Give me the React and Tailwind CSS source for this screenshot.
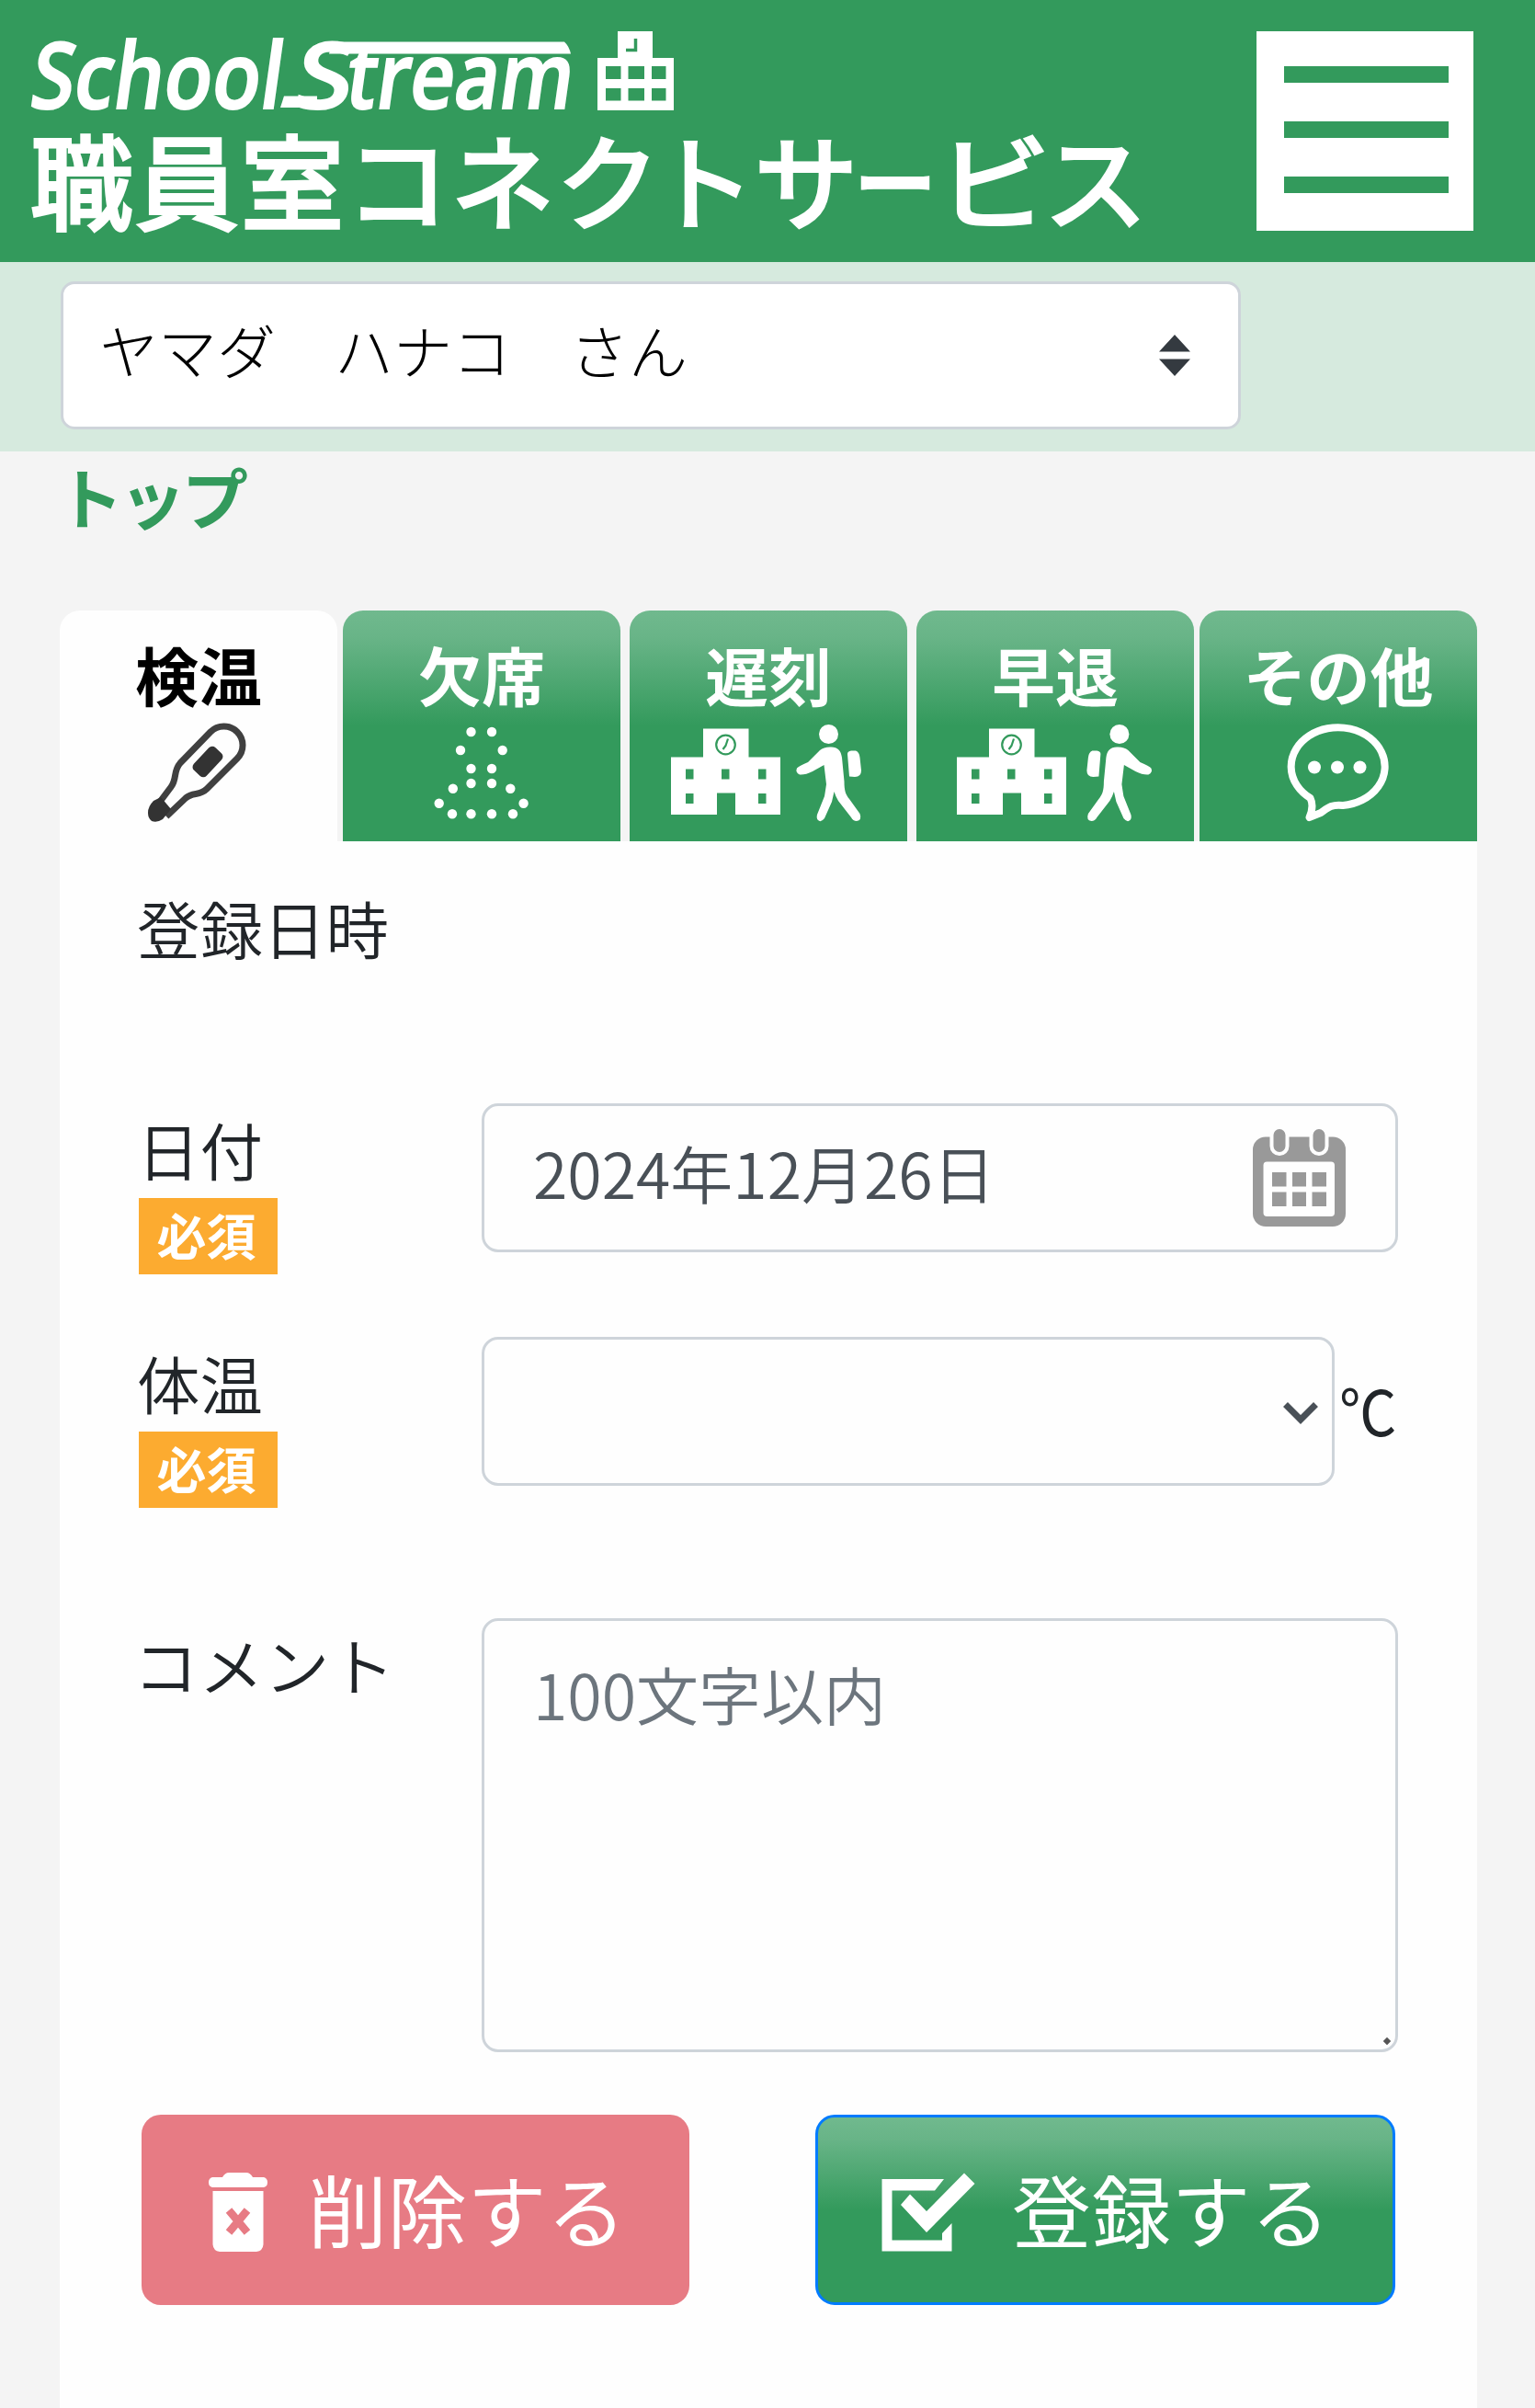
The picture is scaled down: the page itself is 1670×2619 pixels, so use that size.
import React from "react";

function SchoolMark() {
  return (
    <svg className="ml-[26px] h-[86px] w-[83px]" viewBox="650 34 83 86" fill="#fff">
      <path
        fillRule="evenodd"
        d="M650 63H672V34H710V63H733V120H650ZM659 72V86H675.5V72ZM683.5 72V86H701V72ZM709 72V86H724.5V72ZM659 96V109.5H675.5V96ZM683.5 96V109.5H701V96ZM709 96V109.5H724.5V96Z"
      />
      <path d="M691.5 42V54.5H681" fill="none" stroke="#339a5c" strokeWidth="3.5" />
    </svg>
  );
}

function Header() {
  return (
    <header className="flex h-[285px] items-start justify-between bg-[#339a5c] pl-[34px] pr-[67px] pt-[34px]">
      <div className="text-white">
        <div className="flex h-[86px] items-start">
          <div className="relative h-[86px] w-[590px]">
            <div className="-ml-[4px] flex h-[86px] origin-bottom-left -skew-x-[8deg] whitespace-nowrap font-['Open_Sans',sans-serif] text-[100px] font-semibold leading-[90px] [-webkit-text-stroke:2px_#fff]">
              <span className="block w-[288px]">
                <span className="inline-block origin-left scale-x-[0.86]">School</span>
              </span>
              <span className="block w-[64px]">
                <span className="inline-block origin-left scale-x-[1.12]">S</span>
              </span>
              <span className="inline-block origin-left scale-x-[0.84]">tream</span>
            </div>
            <svg className="absolute left-0 top-0 h-[86px] w-[590px]" viewBox="34 34 590 86" fill="#fff">
              <path d="M362 45.500H614Q619 50 621 58.500H358Z" />
              <path d="M309 104.500H345V117H305Z" />
            </svg>
          </div>
          <SchoolMark />
        </div>
        <div className="-ml-px mt-[16px] flex h-[115px] whitespace-nowrap text-[112px] leading-[114px] [-webkit-text-stroke:4px_#fff]">
          <span className="block w-[676px] tracking-[2.5px]">職員室コネク</span>
          <span className="block w-[112px]">ト</span>
          <span className="block w-[97px]">サ</span>
          <span className="block w-[107px]">
            <span className="inline-block scale-x-[0.8]">ー</span>
          </span>
          <span className="block w-[111px]">
            <span className="inline-block scale-x-110">ビ</span>
          </span>
          <span className="block">ス</span>
        </div>
      </div>
      <button className="flex h-[217px] w-[236px] flex-col justify-between bg-white pb-[41px] pl-[30px] pr-[27px] pt-[38px]">
        <span className="block h-[18px] w-full bg-[#339a5c]" />
        <span className="block h-[18px] w-full bg-[#339a5c]" />
        <span className="block h-[18px] w-full bg-[#339a5c]" />
      </button>
    </header>
  );
}

function PersonBar() {
  return (
    <div className="h-[206px] bg-[#d6eade] pl-[66px] pt-[21px]">
      <div className="flex h-[161px] w-[1284px] items-center justify-between rounded-[15px] border-[3px] border-[#ced4da] bg-white pl-[39px] pr-[52px]">
        <span className="relative -top-[8px] whitespace-nowrap text-[64px] font-light leading-[80px] text-black">
          ヤマダ　ハナコ　さん
        </span>
        <svg className="h-[45px] w-[34px]" viewBox="0 0 34 45" fill="#343a40">
          <path d="M17 0L34 18.500H0ZM0 26.500H34L17 45Z" />
        </svg>
      </div>
    </div>
  );
}

function Thermometer() {
  return (
    <svg className="h-[110px] w-[260px]" viewBox="86 786 260 110">
      <path
        d="M171 876L186 856C193 847 188 839 196 830L229 796A20 20 0 0 1 258 825L225 858C217 866 210 861 202 868L181 888"
        fill="none"
        stroke="#404040"
        strokeWidth="7"
      />
      <path d="M161 884Q161 877 167 871L175 867L186 880L177 891Q171 895 165 893Q161 890 161 884Z" fill="#333" />
      <rect x="209" y="819" width="34" height="19" rx="5" fill="#333" transform="rotate(-47 226 828.5)" />
    </svg>
  );
}

const dots = [
  [512.5, 796], [535, 796], [501, 816], [546.7, 816], [512.5, 836], [535, 836],
  [512.5, 852], [535, 852], [492.8, 857.7], [555.3, 857.7], [477.7, 873.7],
  [569.6, 873.7], [492, 885.3], [512.5, 885.3], [535, 885.3], [558, 885.3],
];

function DottedPerson() {
  return (
    <svg className="h-[110px] w-[260px]" viewBox="394 786 260 110" fill="#fff">
      {dots.map(([x, y]) => (
        <circle key={x + "-" + y} cx={x} cy={y} r="5.200" />
      ))}
    </svg>
  );
}

function SchoolBuilding() {
  return (
    <g>
      <path d="M730 823.500H765V792.500H814.500V823.500H849V886H800V862.500H780V886H730Z" />
      <g fill="#339a5c">
        <rect x="746" y="836.500" width="8.500" height="11" />
        <rect x="785" y="836.500" width="8.500" height="11" />
        <rect x="825" y="836.500" width="8.500" height="11" />
        <rect x="746" y="863" width="8.500" height="11" />
        <rect x="825" y="863" width="8.500" height="11" />
      </g>
      <circle cx="789.500" cy="810" r="10.300" fill="none" stroke="#339a5c" strokeWidth="2.200" />
      <path d="M792 803.500L789.500 811L786.500 815" fill="none" stroke="#339a5c" strokeWidth="2.200" />
    </g>
  );
}

function Walker() {
  return (
    <g>
      <ellipse cx="901.500" cy="798.500" rx="10.500" ry="10.500" />
      <path d="M903 812.500C911 812 915 816 916 824L918.500 850C918.500 860 920 864 924 869L935.500 885Q938 892 932 893Q928 893 926 889L912 871Q909 866 907.500 861L905 872L897 890Q893 895 890 892Q888 890 889 886L897 866Q898 860 899 853L896.500 832L884 839Q876 843 870 842.500Q865 840 867 835.500Q869 833 879 829L892 816Q896 812.500 903 812.500Z" />
      <path d="M926 816.500H931Q935 818 935.500 824L937 838Q937 845 930 845L924 844.500L922 820Q922 817 926 816.500Z" />
    </g>
  );
}

function ArriveIcon() {
  return (
    <svg className="h-[110px] w-[302px]" viewBox="685 786 302 110" fill="#fff">
      <SchoolBuilding />
      <Walker />
    </svg>
  );
}

function LeaveIcon() {
  return (
    <svg className="h-[110px] w-[302px]" viewBox="997 786 302 110" fill="#fff">
      <g transform="translate(311 0)">
        <SchoolBuilding />
      </g>
      <g transform="translate(2119.400 0) scale(-1 1)">
        <Walker />
      </g>
    </svg>
  );
}

function BubbleIcon() {
  return (
    <svg className="h-[110px] w-[302px]" viewBox="1305 786 302 110">
      <path
        d="M1424.500 889C1428 881 1429 875 1425.500 868A51 42.500 0 1 1 1461 876C1448 874.500 1444 879 1437 884Z"
        fill="none"
        stroke="#fff"
        strokeWidth="8"
        strokeLinejoin="round"
      />
      <circle cx="1430" cy="834.500" r="7" fill="#fff" />
      <circle cx="1455" cy="834.500" r="7" fill="#fff" />
      <circle cx="1479.500" cy="834.500" r="7" fill="#fff" />
    </svg>
  );
}

function Tab({ label, active, className, children }) {
  return (
    <div
      className={
        "flex h-[251px] w-[302px] shrink-0 flex-col items-center rounded-t-[22px] " +
        (active
          ? "bg-[#fefefe] text-black "
          : "bg-[linear-gradient(180deg,#70b98e_0%,#68b487_12%,#339a5c_50%)] text-white ") +
        className
      }
    >
      <span className="mt-[34px] h-[76px] whitespace-nowrap text-[69px] font-bold leading-[71px]">{label}</span>
      <div className="mt-[12px]">{children}</div>
    </div>
  );
}

function Tabs() {
  return (
    <div className="flex pl-[65px]">
      <Tab label="検温" active className="">
        <Thermometer />
      </Tab>
      <Tab label="欠席" className="ml-[6px]">
        <DottedPerson />
      </Tab>
      <Tab label="遅刻" className="ml-[10px]">
        <ArriveIcon />
      </Tab>
      <Tab label="早退" className="ml-[10px]">
        <LeaveIcon />
      </Tab>
      <Tab label="その他" className="ml-[6px]">
        <BubbleIcon />
      </Tab>
    </div>
  );
}

function Label({ text, required }) {
  return (
    <div className="flex w-[374px] shrink-0 flex-col items-start">
      <span className="-ml-px h-[92px] whitespace-nowrap text-[68.5px] font-[350] leading-[94px]">{text}</span>
      {required && (
        <span className="ml-px mt-[8px] flex h-[83px] w-[151px] items-center justify-center bg-[#fcab30] text-[54px] font-bold leading-[76px] text-white">
          <span className="relative -left-[2px] -top-[2px]">必須</span>
        </span>
      )}
    </div>
  );
}

function CalendarIcon() {
  return (
    <svg className="h-[108px] w-[102px]" viewBox="1363 1227 102 108">
      <rect x="1363" y="1236.500" width="101" height="97.500" rx="14" fill="#999" />
      <rect x="1374.500" y="1263.500" width="77.500" height="59.500" rx="4" fill="#fefefe" />
      <g fill="#999" stroke="#fefefe" strokeWidth="4">
        <rect x="1383.500" y="1226" width="17" height="29" rx="8.500" />
        <rect x="1426.500" y="1226" width="17" height="29" rx="8.500" />
      </g>
      <path
        fill="#999"
        d="M1384 1275h15.500v15.500h-15.500zM1406 1275h15v15.500h-15zM1427.500 1275h15.500v15.500h-15.500zM1384 1296.500h15.500v15.500h-15.500zM1406 1296.500h15v15.500h-15zM1427.500 1296.500h15.500v15.500h-15.500z"
      />
    </svg>
  );
}

function TrashIcon() {
  return (
    <svg className="mt-[5px] h-[86px] w-[64px]" viewBox="227 2363 64 86" fill="#fff">
      <path d="M231 2368H242Q245 2363 249 2363H268Q272 2363 275 2368H287Q291 2369 291 2373.500T287 2379H231Q227 2378 227 2373.500T231 2368Z" />
      <path d="M231.500 2383H286.500V2441Q286 2448 279 2449H239Q232 2448 231.500 2441Z" />
      <path d="M249 2404L269 2428M269 2404L249 2428" stroke="#e77b84" strokeWidth="8.500" />
    </svg>
  );
}

function CheckIcon() {
  return (
    <svg className="mt-[5px] h-[86px] w-[102px]" viewBox="959 2363 102 86" fill="#fff">
      <path d="M959.500 2370H1027L1017 2382.500H970.500V2436.500H1025V2429L1035.500 2418V2448.500H959.500Z" />
      <path d="M990 2386.500L980 2398L1008 2428L1060.500 2375L1049 2363.500L1008 2405Z" />
    </svg>
  );
}

function Form() {
  return (
    <main className="ml-[65px] h-[1704px] w-[1542px] bg-[#fefefe] pl-[85px] pr-[86px] pt-[47px] text-[#212529]">
      <Label text="登録日時" />
      <div className="mt-[146px] flex h-[254px]">
        <div className="pt-[3px]">
          <Label text="日付" required />
        </div>
        <div className="flex h-[162px] w-[997px] items-center justify-between rounded-[18px] border-[3.5px] border-[#ced4da] pl-[53px] pr-[53px] text-[#495057]">
          <span className="relative -top-[6px] whitespace-nowrap text-[68px] font-[350] leading-[90px]">
            2024年12月26日
          </span>
          <CalendarIcon />
        </div>
      </div>
      <div className="flex h-[306px]">
        <div className="pt-[3px]">
          <Label text="体温" required />
        </div>
        <div className="flex h-[162px] w-[928px] shrink-0 items-center justify-end rounded-[18px] border-[3.5px] border-[#ced4da] pr-[15px]">
          <svg className="mt-[3px] h-[24px] w-[38px]" viewBox="0 0 38 24" fill="none" stroke="#495057" strokeWidth="7">
            <path d="M2.500 2.500L19 19L35.500 2.500" />
          </svg>
        </div>
        <span className="ml-[5px] mt-[34px] h-[90px] w-[64px] origin-left scale-x-[0.92] text-[68px] leading-[90px]">℃</span>
      </div>
      <div className="flex h-[540px]">
        <div className="pt-[3px]">
          <div className="w-[374px] origin-left scale-x-[1.04]">
            <div className="-ml-[4px]">
              <Label text="コメント" />
            </div>
          </div>
        </div>
        <div className="relative h-[472px] w-[997px] shrink-0 rounded-[18px] border-[3.5px] border-[#ced4da] pl-[53px] pt-[34px]">
          <span className="block whitespace-nowrap text-[68px] font-[350] leading-[90px] text-[#6c757d]">
            100文字以内
          </span>
          <span className="absolute bottom-[6px] right-[6px] block h-[6px] w-[6px] rotate-45 bg-[#555]" />
        </div>
      </div>
      <div className="flex items-start justify-between pl-[4px] pr-[3px]">
        <button className="flex h-[207px] w-[596px] items-center rounded-[21px] bg-[#e77b84] pl-[73px] text-white">
          <TrashIcon />
          <span className="relative -top-[2px] ml-[44px] whitespace-nowrap text-[86px] leading-[100px] tracking-[0.7px]">
            削除する
          </span>
        </button>
        <button className="flex h-[207px] w-[631px] items-center rounded-[21px] border-[3.5px] border-[#007bff] bg-[linear-gradient(180deg,#70b98e_0%,#68b487_12%,#339a5c_50%)] pl-[69px] text-white">
          <CheckIcon />
          <span className="relative -top-[2px] ml-[40px] whitespace-nowrap text-[86px] leading-[100px] tracking-[0.7px]">
            登録する
          </span>
        </button>
      </div>
    </main>
  );
}

export default function App() {
  return (
    <div className="h-[2619px] w-[1670px] overflow-hidden bg-[#f4f4f4] font-['Noto_Sans_CJK_JP',sans-serif]">
      <Header />
      <PersonBar />
      <div className="h-[173px] pl-[62px]">
        <a className="inline-block whitespace-nowrap pt-[4px] text-[72px] font-bold leading-[88px] tracking-[-4px] text-[#339a5c]">
          トップ
        </a>
      </div>
      <Tabs />
      <Form />
    </div>
  );
}
